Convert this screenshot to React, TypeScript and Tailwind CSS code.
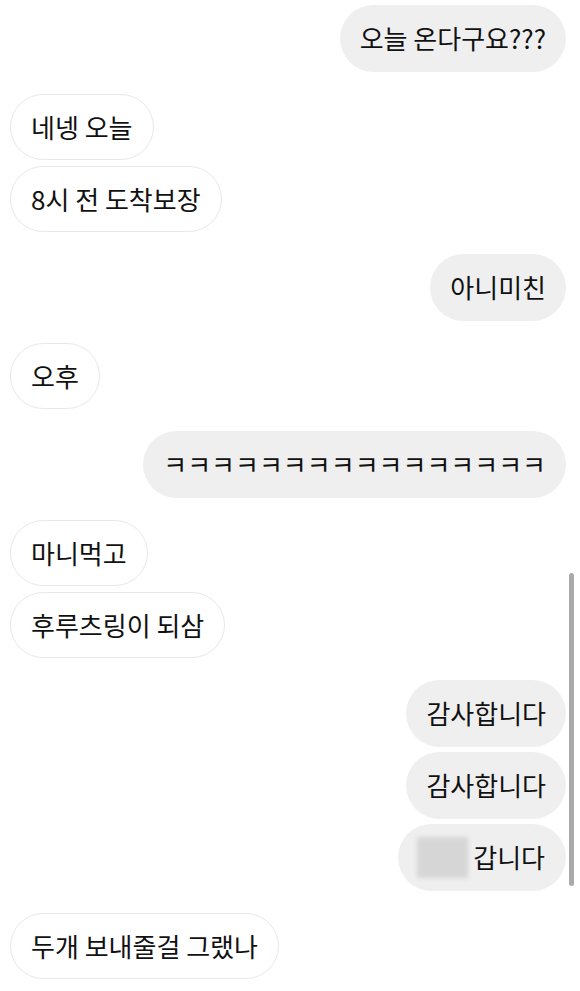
import React from "react";

type Msg = {
  text: string;
  mine?: boolean;
  blur?: boolean;
  gap?: "big" | "small";
};

const messages: Msg[] = [
  { text: "오늘 온다구요???", mine: true },
  { text: "네넹 오늘", gap: "big" },
  { text: "8시 전 도착보장", gap: "small" },
  { text: "아니미친", mine: true, gap: "big" },
  { text: "오후", gap: "big" },
  { text: "ㅋㅋㅋㅋㅋㅋㅋㅋㅋㅋㅋㅋㅋㅋㅋㅋ", mine: true, gap: "big" },
  { text: "마니먹고", gap: "big" },
  { text: "후루츠링이 되삼", gap: "small" },
  { text: "감사합니다", mine: true, gap: "big" },
  { text: "감사합니다", mine: true, gap: "small" },
  { text: "갑니다", mine: true, blur: true, gap: "small" },
  { text: "두개 보내줄걸 그랬나", gap: "big" },
];

const Bubble: React.FC<{ msg: Msg }> = ({ msg }) => {
  const spacing =
    msg.gap === "big" ? "mt-[22px]" : msg.gap === "small" ? "mt-[5.5px]" : "";
  const side = msg.mine
    ? "self-end bg-[#efefef]"
    : "self-start bg-white border-[1.5px] border-[#e8e8e8]";
  return (
    <div
      className={`${spacing} ${side} h-[66.5px] rounded-full flex items-center ${
        msg.blur ? "pl-[19px] pr-[21px]" : "px-[20px]"
      }`}
    >
      {msg.blur && (
        <div className="w-[51px] h-[41px] mr-[5px] bg-[#d6d6d6] blur-[2px]" />
      )}
      <span className="text-[26px] leading-[34px] text-[#111111] whitespace-nowrap">
        {msg.text}
      </span>
    </div>
  );
};

export default function App() {
  return (
    <div
      className="relative w-[580px] h-[991px] bg-white overflow-hidden"
      style={{ fontFamily: '"Noto Sans CJK KR", "Noto Sans", sans-serif' }}
    >
      <div className="flex flex-col pt-[5px] pl-[10px] pr-[14px]">
        {messages.map((m, i) => (
          <Bubble key={i} msg={m} />
        ))}
      </div>
      {/* scrollbar */}
      <div className="absolute left-[569px] top-[573px] w-[5px] h-[313px] rounded-full bg-[#a9a9a9]" />
    </div>
  );
}
